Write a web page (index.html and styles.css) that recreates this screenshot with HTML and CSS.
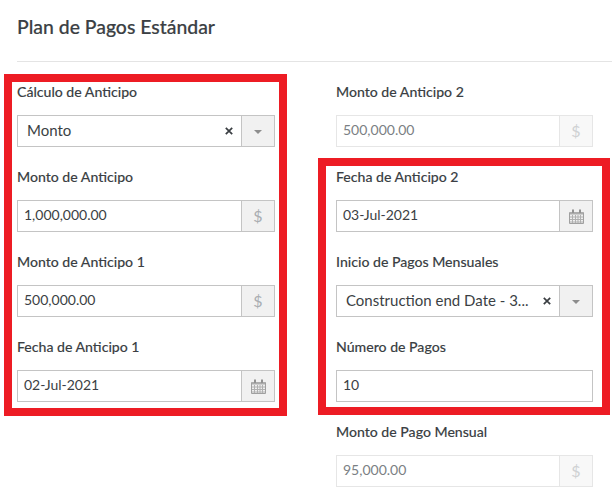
FILE: index.html
```html
<!DOCTYPE html>
<html lang="es">
<head>
<meta charset="utf-8">
<title>Plan de Pagos Estándar</title>
<link rel="stylesheet" href="styles.css">
</head>
<body>
<svg class="defs" width="0" height="0" aria-hidden="true">
  <symbol id="cal" viewBox="0 0 15 15">
    <path d="M.5 3.500h14v11H.5z" fill="#efefef" stroke="#a0a0a0"/>
    <path d="M1 3h13v2.500H1z" fill="#acacac"/>
    <path d="M1 8h13M1 10.500h13M1 13h13M3.500 6v8M6.500 6v8M9 6v8M11.500 6v8" stroke="#b0b0b0" fill="none"/>
    <path d="M4 .5v3.500M11 .5v3.500" stroke="#929292" stroke-width="2" fill="none"/>
  </symbol>
  <symbol id="clear" viewBox="0 0 8 8">
    <path d="M.8 .8l6.400 6.400M7.200 .8L.8 7.200" stroke="#3a3e42" stroke-width="1.700" fill="none"/>
  </symbol>
</svg>
<main class="page">
  <h1 class="title">Plan de Pagos Estándar</h1>
  <form class="form">
    <div class="field">
      <div class="label">Cálculo de Anticipo</div>
      <div class="control">
        <div class="value value-select">Monto</div>
        <svg class="clear"><use href="#clear"/></svg>
        <div class="addon"><span class="caret"></span></div>
      </div>
    </div>
    <div class="field">
      <div class="label">Monto de Anticipo 2</div>
      <div class="control is-disabled">
        <div class="value">500,000.00</div>
        <div class="addon">$</div>
      </div>
    </div>
    <div class="field">
      <div class="label">Monto de Anticipo</div>
      <div class="control">
        <div class="value">1,000,000.00</div>
        <div class="addon">$</div>
      </div>
    </div>
    <div class="field">
      <div class="label">Fecha de Anticipo 2</div>
      <div class="control">
        <div class="value">03-Jul-2021</div>
        <div class="addon"><svg class="cal"><use href="#cal"/></svg></div>
      </div>
    </div>
    <div class="field">
      <div class="label">Monto de Anticipo 1</div>
      <div class="control">
        <div class="value">500,000.00</div>
        <div class="addon">$</div>
      </div>
    </div>
    <div class="field">
      <div class="label">Inicio de Pagos Mensuales</div>
      <div class="control">
        <div class="value value-select">Construction end Date - 3...</div>
        <svg class="clear"><use href="#clear"/></svg>
        <div class="addon"><span class="caret"></span></div>
      </div>
    </div>
    <div class="field">
      <div class="label">Fecha de Anticipo 1</div>
      <div class="control">
        <div class="value">02-Jul-2021</div>
        <div class="addon"><svg class="cal"><use href="#cal"/></svg></div>
      </div>
    </div>
    <div class="field">
      <div class="label">Número de Pagos</div>
      <div class="control">
        <div class="value">10</div>
      </div>
    </div>
    <div class="field"></div>
    <div class="field">
      <div class="label">Monto de Pago Mensual</div>
      <div class="control is-disabled">
        <div class="value">95,000.00</div>
        <div class="addon">$</div>
      </div>
    </div>
  </form>
  <div class="frame frame-left"></div>
  <div class="frame frame-right"></div>
</main>
</body>
</html>
```
FILE: styles.css
```css
html, body {
  margin: 0;
  padding: 0;
  background: #fff;
}
.defs {
  position: absolute;
}
.page {
  position: relative;
  width: 612px;
  height: 498px;
  overflow: hidden;
  font-family: Lato, "Liberation Sans", sans-serif;
  color: #3b3f44;
}
.title {
  margin: 0 0 0 17px;
  height: 62px;
  box-sizing: border-box;
  padding: 15px 0 0 0;
  border-bottom: 1px solid #e4e4e4;
  font-size: 19.400px;
  line-height: 24px;
  font-weight: 500;
  -webkit-text-stroke: 0.2px #3b3f44;
}
.form {
  display: grid;
  grid-template-columns: 258px 257px;
  column-gap: 61px;
  row-gap: 21px;
  padding: 21px 0 0 17px;
}
.field {
  min-height: 64px;
}
.label {
  height: 32px;
  font-size: 14.100px;
  line-height: 17px;
  font-weight: 500;
  -webkit-text-stroke: 0.12px #3b3f44;
}
.control {
  display: flex;
  align-items: center;
  height: 32px;
  box-sizing: border-box;
  border: 1px solid #c4c4c4;
  background: #fff;
  font-size: 14px;
  line-height: 28px;
}
.value {
  flex: 1;
  min-width: 0;
  padding: 0 0 2px 6px;
  white-space: nowrap;
}
.value-select {
  padding-left: 9px;
  font-size: 15px;
}
.clear {
  flex: none;
  width: 8px;
  height: 8px;
  margin-right: 8px;
}
.addon {
  flex: none;
  display: flex;
  align-items: center;
  justify-content: center;
  width: 33px;
  height: 100%;
  box-sizing: border-box;
  border-left: 1px solid #c4c4c4;
  background: #f1f1f1;
  color: #a9adb1;
  font-size: 16px;
}
.caret {
  width: 0;
  height: 0;
  border-left: 4px solid transparent;
  border-right: 4px solid transparent;
  border-top: 4px solid #8d8d8d;
  margin-top: 1px;
}
.cal {
  width: 15px;
  height: 15px;
}
.is-disabled {
  border-color: #e6e6e6;
  color: #7b7f84;
}
.is-disabled .addon {
  border-left-color: #e6e6e6;
  background: #f8f8f8;
  color: #cfd1d3;
}
.frame {
  position: absolute;
  box-sizing: border-box;
  border: 8px solid #ed1c24;
}
.frame-left {
  left: 4px;
  top: 74px;
  width: 283px;
  height: 342px;
}
.frame-right {
  left: 318px;
  top: 158px;
  width: 292px;
  height: 257px;
}
```
